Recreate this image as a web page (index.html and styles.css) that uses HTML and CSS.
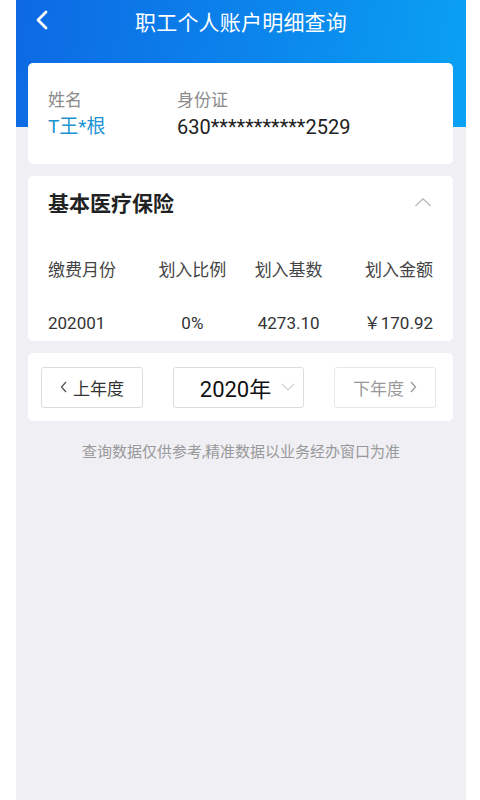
FILE: index.html
```html
<!DOCTYPE html>
<html lang="zh-CN">
<head>
<meta charset="utf-8">
<title>职工个人账户明细查询</title>
<link rel="stylesheet" href="styles.css">
</head>
<body>
<div class="phone">
  <div class="topbar">
    <div class="back">
      <svg width="14" height="20" viewBox="0 0 14 20"><polyline points="11,2 3,10 11,18" fill="none" stroke="#fff" stroke-width="2.8" stroke-linecap="round" stroke-linejoin="round"/></svg>
    </div>
    <div class="title">职工个人账户明细查询</div>
    <div></div>
  </div>

  <div class="card info">
    <div class="col c1">
      <div class="label">姓名</div>
      <div class="value name">T王*根</div>
    </div>
    <div class="col">
      <div class="label">身份证</div>
      <div class="value">630***********2529</div>
    </div>
  </div>

  <div class="card detail">
    <div class="dhead">
      <div class="dtitle">基本医疗保险</div>
      <svg width="18" height="10" viewBox="0 0 18 10"><polyline points="1.5,9 9,1.8 16.5,9" fill="none" stroke="#bdbdbd" stroke-width="1.5"/></svg>
    </div>
    <div class="row thead">
      <span>缴费月份</span><span>划入比例</span><span>划入基数</span><span>划入金额</span>
    </div>
    <div class="row tdata">
      <span>202001</span><span>0%</span><span>4273.10</span><span>￥170.92</span>
    </div>
  </div>

  <div class="card years">
    <div class="btn prev">
      <svg width="7" height="12" viewBox="0 0 7 12"><polyline points="6,1 1.5,6 6,11" fill="none" stroke="#555" stroke-width="1.3"/></svg>
      <span>上年度</span>
    </div>
    <div class="btn select">
      <span>2020年</span>
      <svg width="14" height="8" viewBox="0 0 14 8"><polyline points="1,1 7,7 13,1" fill="none" stroke="#d0d0d0" stroke-width="1.2"/></svg>
    </div>
    <div class="btn next">
      <span>下年度</span>
      <svg width="7" height="12" viewBox="0 0 7 12"><polyline points="1,1 5.5,6 1,11" fill="none" stroke="#999" stroke-width="1.3"/></svg>
    </div>
  </div>

  <p class="note">查询数据仅供参考,精准数据以业务经办窗口为准</p>
</div>
</body>
</html>
```

FILE: styles.css
```css
* { box-sizing: border-box; }
html, body { margin: 0; padding: 0; background: #ffffff; }
body {
  font-family: Roboto, "Noto Sans CJK SC", sans-serif;
  width: 480px;
  height: 800px;
  overflow: hidden;
}
.phone {
  width: 450px;
  height: 800px;
  margin-left: 16px;
  background:
    linear-gradient(100deg, #0d69e3 0%, #0b86ec 55%, #0aa2f4 100%) top left / 100% 127px no-repeat,
    #efeff4;
}
.topbar {
  height: 42px;
  display: grid;
  grid-template-columns: 60px 1fr 60px;
  align-items: center;
}
.back { display: flex; align-items: center; padding-left: 19px; padding-bottom: 2px; }
.title {
  color: #ffffff;
  font-size: 21px;
  text-align: center;
  font-family: "Noto Sans CJK SC", sans-serif;
  letter-spacing: 0.2px;
}
.card {
  background: #ffffff;
  border-radius: 5px;
  margin: 0 13px 0 12px;
}
.info {
  margin-top: 21px;
  display: flex;
  padding: 25px 20px;
  height: 101px;
}
.col { display: flex; flex-direction: column; gap: 3px; }
.c1 { width: 129px; }
.label { font-size: 17px; line-height: 24px; color: #8a8a8a; }
.value { font-size: 20px; line-height: 24px; color: #222; }
.name { color: #1a93d3; font-size: 19px; }
.detail {
  margin-top: 12px;
  padding: 0 21px 6px 20px;
}
.dhead {
  height: 52px;
  display: flex;
  align-items: center;
  justify-content: space-between;
}
.dtitle { font-size: 21px; font-weight: 700; color: #222; }
.row {
  display: grid;
  grid-template-columns: repeat(4, 1fr);
  line-height: 24px;
  margin-right: -1px;
}
.row span:nth-child(2), .row span:nth-child(3) { text-align: center; }
.row span:nth-child(4) { text-align: right; }
.thead { padding-top: 30px; font-size: 17px; color: #444; }
.tdata { padding-top: 29px; font-size: 17px; color: #333; }
.years {
  margin-top: 12px;
  height: 68px;
  display: flex;
  align-items: center;
  gap: 30px;
  padding-left: 13px;
}
.btn {
  height: 41px;
  border: 1px solid #dcdcdc;
  border-radius: 3px;
  display: flex;
  align-items: center;
  justify-content: center;
  gap: 6px;
}
.prev { width: 102px; font-size: 17px; color: #333; }
.select { width: 131px; font-size: 22px; color: #111; gap: 10px; padding-left: 18px; }
.next { width: 102px; font-size: 17px; color: #999; border-color: #e8e8e8; }
.note {
  margin: 21px 0 0;
  text-align: center;
  font-size: 15px;
  line-height: 20px;
  color: #999;
}
```
